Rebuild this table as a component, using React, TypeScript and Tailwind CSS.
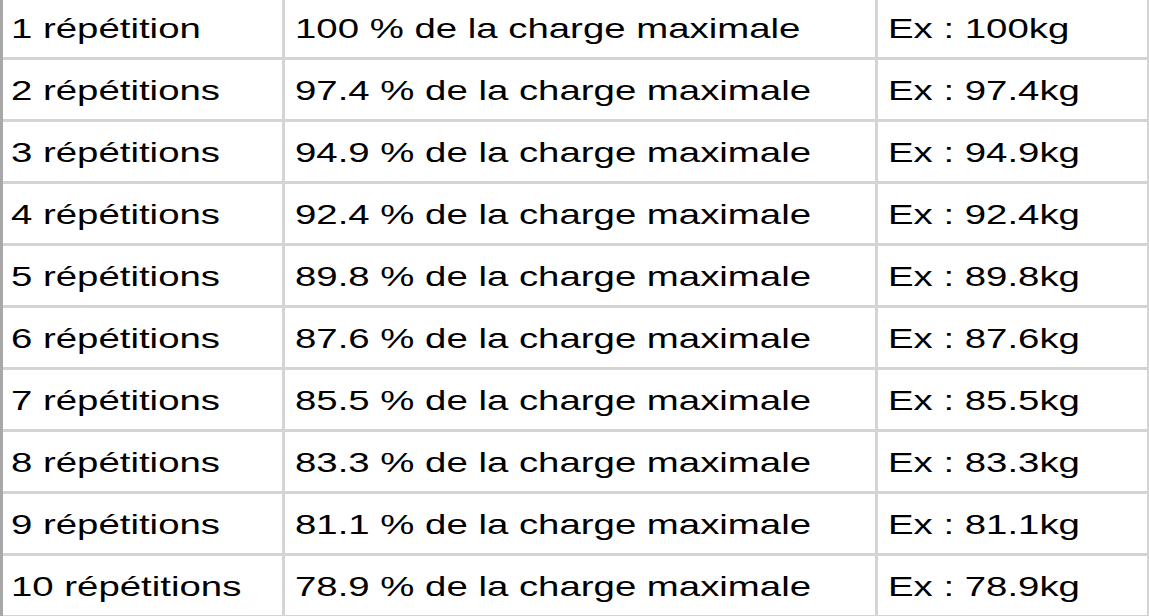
import React from "react";

const rows = [
  ["1 répétition", "100 % de la charge maximale", "Ex : 100kg"],
  ["2 répétitions", "97.4 % de la charge maximale", "Ex : 97.4kg"],
  ["3 répétitions", "94.9 % de la charge maximale", "Ex : 94.9kg"],
  ["4 répétitions", "92.4 % de la charge maximale", "Ex : 92.4kg"],
  ["5 répétitions", "89.8 % de la charge maximale", "Ex : 89.8kg"],
  ["6 répétitions", "87.6 % de la charge maximale", "Ex : 87.6kg"],
  ["7 répétitions", "85.5 % de la charge maximale", "Ex : 85.5kg"],
  ["8 répétitions", "83.3 % de la charge maximale", "Ex : 83.3kg"],
  ["9 répétitions", "81.1 % de la charge maximale", "Ex : 81.1kg"],
  ["10 répétitions", "78.9 % de la charge maximale", "Ex : 78.9kg"],
];

function Txt({ children }: { children: React.ReactNode }) {
  return (
    <span className="inline-block whitespace-nowrap origin-left scale-x-[1.37]">
      {children}
    </span>
  );
}

export default function App() {
  return (
    <div
      className="w-[1149px] h-[616px] overflow-hidden bg-white text-black"
      style={{ fontFamily: '"Liberation Sans", Arial, sans-serif' }}
    >
      <div className="mt-[-2px] border-l-[3px] border-l-[#a8a8a8] border-r-[2px] border-r-[#d4d4d4]">
        {rows.map((r, i) => (
          <div
            key={i}
            className="flex h-[62px] border-b-[3px] border-[#d4d4d4]"
          >
            <div className="w-[282px] shrink-0 flex items-center pl-[8px] pt-[2px] text-[28px] leading-none border-r-[3px] border-[#d4d4d4]">
              <Txt>{r[0]}</Txt>
            </div>
            <div className="w-[593px] shrink-0 flex items-center pl-[10px] pt-[2px] text-[28px] leading-none border-r-[3px] border-[#d4d4d4]">
              <Txt>{r[1]}</Txt>
            </div>
            <div className="flex-1 flex items-center pl-[10px] pt-[2px] text-[28px] leading-none">
              <Txt>{r[2]}</Txt>
            </div>
          </div>
        ))}
      </div>
    </div>
  );
}
